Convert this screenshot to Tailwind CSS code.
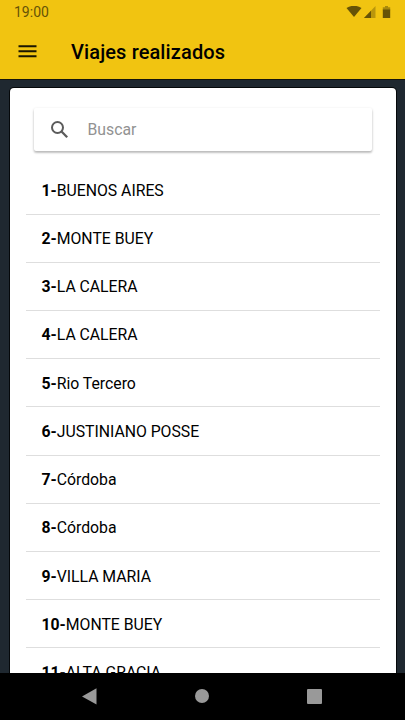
<!DOCTYPE html>
<html lang="es">
<head>
<meta charset="utf-8">
<meta name="viewport" content="width=device-width, initial-scale=1">
<title>Viajes realizados</title>
<script src="https://cdn.jsdelivr.net/npm/@tailwindcss/browser@4"></script>
</head>
<body class="font-[Roboto,sans-serif] text-black">
<div class="flex h-[720px] w-[405px] flex-col overflow-hidden bg-[#1f2830]">
  <header class="h-[80px] shrink-0 border-b border-[#15140c] bg-[#f1c411]">
    <div class="flex h-[25px] items-center justify-between pr-[13px] pl-[14px]">
      <span class="text-[14px] leading-[25px] text-[#665307]">19:00</span>
      <svg class="h-[13px] w-[46px]" viewBox="0 0 46 13">
        <path d="M.5 2Q8 -2.500 15.500 2L8 11Z" fill="#665307"/>
        <path d="M29.500 0V12H18Z" fill="#b9960c"/>
        <path d="M25 4.700V12H18Z" fill="#665307"/>
        <path d="M39 0h3v1.200h2.200v3h-7.400v-3H39Z" fill="#a8890c"/>
        <path d="M36.800 3.500h7.400v8.500h-7.400Z" fill="#665307"/>
      </svg>
    </div>
    <div class="flex h-[53px] items-center pl-[18px]">
      <svg class="h-[13px] w-[19px]" viewBox="0 0 19 13" fill="#1b1602">
        <path d="M.5 .3h18v2H.5zM.5 5.300h18v2H.5zM.5 10.300h18v2H.5z"/>
      </svg>
      <h1 class="ml-[34px] text-[20px] leading-[28px] font-medium tracking-[0.12px]">Viajes realizados</h1>
    </div>
  </header>
  <main class="flex min-h-0 flex-1 flex-col overflow-hidden pt-[8px] pr-[9px] pl-[10px]">
    <section class="h-[800px] shrink-0 rounded-[4px] bg-white px-4 pt-5 shadow-[0_0_0_1px_#05080a]">
      <div class="mr-[8.500px] ml-[7.500px] flex h-[43px] items-center rounded-[2px] pl-[16px] shadow-[0_2px_2px_rgba(0,0,0,0.16),0_1px_3px_rgba(0,0,0,0.18)]">
        <svg class="size-[19px]" viewBox="0 0 19 19" fill="none" stroke="#5b5b5b" stroke-width="2">
          <circle cx="7.500" cy="7.500" r="5.500"/><path d="M11.500 11.500L17.200 17.200" stroke-width="2.300"/>
        </svg>
        <span class="ml-[19px] text-[15.800px] text-[#929292]">Buscar</span>
      </div>
      <ul class="mt-[15.300px] text-[15.800px] tracking-[-0.02px] [&>li]:flex [&>li]:h-[48.220px] [&>li]:items-center [&>li]:border-b [&>li]:border-[#dedede] [&>li]:pt-[1.500px] [&>li]:pl-[15.500px]">
        <li><b>1-</b>BUENOS AIRES</li>
        <li><b>2-</b>MONTE BUEY</li>
        <li><b>3-</b>LA CALERA</li>
        <li><b>4-</b>LA CALERA</li>
        <li><b>5-</b>Rio Tercero</li>
        <li><b>6-</b>JUSTINIANO POSSE</li>
        <li><b>7-</b>Córdoba</li>
        <li><b>8-</b>Córdoba</li>
        <li><b>9-</b>VILLA MARIA</li>
        <li><b>10-</b>MONTE BUEY</li>
        <li><b>11-</b>ALTA GRACIA</li>
      </ul>
    </section>
  </main>
  <nav class="flex h-[47px] shrink-0 items-center bg-black pl-[82px]">
    <svg class="mb-px h-[17px] w-[15px]" viewBox="0 0 15 17" fill="#999"><path d="M14.500 .3V16.500L0 8.400Z"/></svg>
    <span class="mb-px ml-[98px] size-[14px] rounded-full bg-[#999]"></span>
    <span class="mb-px ml-[98px] size-[15px] rounded-[1px] bg-[#999]"></span>
  </nav>
</div>
</body>
</html>
